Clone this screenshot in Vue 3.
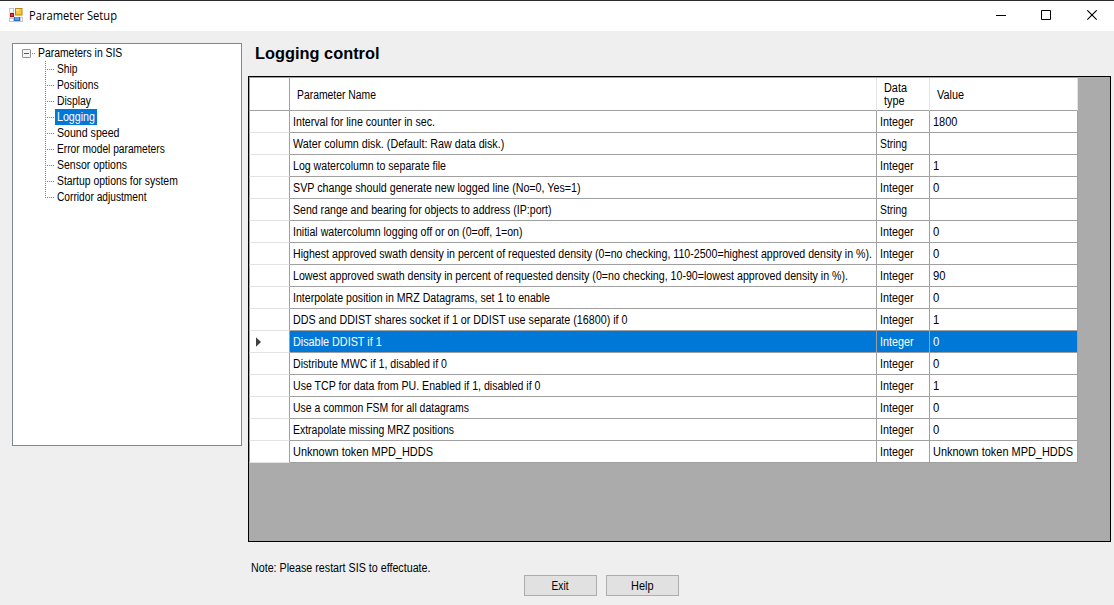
<script setup>
const tree = [
  ['Ship', 20.5], ['Positions', 41.5], ['Display', 34], ['Logging', 38], ['Sound speed', 62.5],
  ['Error model parameters', 107.8], ['Sensor options', 70],
  ['Startup options for system', 120.8], ['Corridor adjustment', 89.5]
]
const rows = [
  ['Interval for line counter in sec.', 142, 'Integer', '1800', 24.5],
  ['Water column disk. (Default: Raw data disk.)', 211.3, 'String', '', 0],
  ['Log watercolumn to separate file', 153, 'Integer', '1', 6.3],
  ['SVP change should generate new logged line (No=0, Yes=1)', 287.5, 'Integer', '0', 6.3],
  ['Send range and bearing for objects to address (IP:port)', 258.5, 'String', '', 0],
  ['Initial watercolumn logging off or on (0=off, 1=on)', 229.5, 'Integer', '0', 6.3],
  ['Highest approved swath density in percent of requested density (0=no checking, 110-2500=highest approved density in %).', 579, 'Integer', '0', 6.3],
  ['Lowest approved swath density in percent of requested density (0=no checking, 10-90=lowest approved density in %).', 555, 'Integer', '90', 12.5],
  ['Interpolate position in MRZ Datagrams, set 1 to enable', 257, 'Integer', '0', 6.3],
  ['DDS and DDIST shares socket if 1 or DDIST use separate (16800) if 0', 334.5, 'Integer', '1', 6.3],
  ['Disable DDIST if 1', 88.7, 'Integer', '0', 6.3],
  ['Distribute MWC if 1, disabled if 0', 154, 'Integer', '0', 6.3],
  ['Use TCP for data from PU. Enabled if 1, disabled if 0', 247.5, 'Integer', '1', 6.3],
  ['Use a common FSM for all datagrams', 176, 'Integer', '0', 6.3],
  ['Extrapolate missing MRZ positions', 161, 'Integer', '0', 6.3],
  ['Unknown token MPD_HDDS', 140, 'Integer', 'Unknown token MPD_HDDS', 140]
]
const selected = 10
const typeWidth = { Integer: 33.5, String: 27 }

// Condenses a label horizontally so that it takes up the given width.
const vFit = {
  mounted(el, { value }) {
    if (value && el.offsetWidth) {
      const natural = el.getBoundingClientRect().width
      el.style.transform = `scaleX(${value / natural})`
    }
  }
}
</script>

<template>
  <div class="window">
    <header class="titlebar">
      <svg class="appicon" width="14" height="14" viewBox="0 0 14 14">
        <rect width="14" height="14" fill="#c4c4c4" />
        <path d="M1 1h3v3H1zM1 11h3v2H1zM12 10h1v3h-1z" fill="#fff" />
        <rect x="5" width="9" height="9" fill="#f6f6f6" />
        <rect x="6" y="0" width="7.5" height="7.5" fill="#b98a12" />
        <rect x="7" y="1" width="5.5" height="5.5" fill="#fdc82f" />
        <rect x="7" y="1" width="3" height="2" fill="#ffe48a" />
        <rect x="0" y="4" width="5" height="6" fill="#f2dada" />
        <rect x="1" y="5" width="4" height="4" fill="#a31312" />
        <rect x="2" y="6" width="2" height="2" fill="#e0402c" />
        <rect x="5" y="9" width="6" height="4" fill="#3668c6" />
        <rect x="6" y="9" width="4" height="3" fill="#5f9cf0" />
      </svg>
      <span v-fit="88" class="t caption">Parameter Setup</span>
      <svg class="controls" width="104" height="12" viewBox="0 0 104 12" fill="none" stroke="#000">
        <path d="M0 5.5h10" />
        <path d="M45.5 .5h9v9h-9z" />
        <path d="M91.3 .3l9.4 9.4M100.7 .3l-9.4 9.4" stroke-width="1.1" />
      </svg>
    </header>

    <div class="body">
      <nav class="tree">
        <div class="root">
          <svg width="14" height="9" viewBox="0 0 14 9">
            <rect x=".5" y=".5" width="8" height="8" rx=".6" fill="#f6f6f6" stroke="#919191" />
            <path d="M2 4.5h5" stroke="#3a5ba6" />
            <path d="M10 4.5h1M12 4.5h1" stroke="#808080" />
          </svg>
          <span v-fit="84.3" class="t">Parameters in SIS</span>
        </div>
        <div v-for="(n, i) in tree" :key="n[0]" class="node">
          <svg width="10" height="16" viewBox="0 0 10 16" stroke="#808080" stroke-dasharray="1 1">
            <path :d="i === tree.length - 1 ? 'M.5 0v9' : 'M.5 0v16'" />
            <path d="M2 8.5h8" />
          </svg>
          <span class="label" :class="{ active: n[0] === 'Logging' }" :style="{ width: n[1] + 4 + 'px' }"><span v-fit="n[1]" class="t">{{ n[0] }}</span></span>
        </div>
      </nav>

      <main class="main">
        <h1><span v-fit="124.5" class="t">Logging control</span></h1>
        <section class="grid">
          <div class="table">
            <div class="row head">
              <div class="cell rh"></div>
              <div class="cell"><span v-fit="79" class="t">Parameter Name</span></div>
              <div class="cell two"><span v-fit="23" class="t data">Data</span><span v-fit="20.5" class="t">type</span></div>
              <div class="cell"><span v-fit="27" class="t">Value</span></div>
            </div>
            <div v-for="(r, i) in rows" :key="i" class="row" :class="{ sel: i === selected }">
              <div class="cell rh">
                <svg v-if="i === selected" width="5" height="10" viewBox="0 0 5 10"><path d="M0 .3L5 5 0 9.7z" fill="#404040" /></svg>
              </div>
              <div class="cell"><span v-fit="r[1]" class="t">{{ r[0] }}</span></div>
              <div class="cell"><span v-fit="typeWidth[r[2]]" class="t">{{ r[2] }}</span></div>
              <div class="cell"><span v-fit="r[4]" class="t">{{ r[3] }}</span></div>
            </div>
          </div>
        </section>
        <footer class="foot">
          <div class="note"><span v-fit="179.5" class="t">Note: Please restart SIS to effectuate.</span></div>
          <div class="buttons">
            <button><span v-fit="17" class="t mid">Exit</span></button>
            <button><span v-fit="22.5" class="t mid">Help</span></button>
          </div>
        </footer>
      </main>
    </div>
  </div>
</template>

<style>
body { margin: 0; overflow: hidden; }
</style>

<style scoped>
.window {
  width: 1114px;
  height: 605px;
  box-sizing: border-box;
  overflow: hidden;
  background: #efefef;
  color: #000;
  font: 12px/14px "Liberation Sans", Arial, sans-serif;
}
.t { display: inline-block; white-space: pre; transform-origin: 0 50%; }
.mid { transform-origin: 50% 50%; }
.titlebar {
  height: 31px;
  box-sizing: border-box;
  border-top: 1px solid #2b2b2b;
  background: #fff;
  display: flex;
  align-items: flex-start;
  padding: 0 14px 0 9px;
}
.appicon { margin-top: 7px; }
.caption { margin: 6px 0 0 5.5px; font: 12px/17px "Open Sans", "Noto Sans", sans-serif; }
.controls { margin: 9px 0 0 auto; }
.body { display: flex; height: 574px; }
.tree {
  width: 230px;
  height: 403px;
  box-sizing: border-box;
  margin: 12px 0 0 12px;
  border: 1px solid #828790;
  background: #fff;
  padding-top: 1px;
}
.root { height: 16px; display: flex; align-items: center; padding-left: 9px; }
.root .t { margin-left: 1.5px; }
.node { height: 16px; display: flex; padding-left: 32px; }
.label { box-sizing: border-box; height: 16px; line-height: 16px; padding-left: 1.5px; white-space: nowrap; }
.label.active { background: #0078d7; color: #fff; }
.main { margin-left: 6px; width: 863px; display: flex; flex-direction: column; }
h1 { margin: 0; height: 45px; box-sizing: border-box; padding: 12px 0 0 7px; font-size: 16.5px; line-height: 20px; font-weight: 700; }
.grid { height: 466px; box-sizing: border-box; border: 1px solid #000; background: #ababab; }
.table { width: 829px; border-top: 1px solid #a0a0a0; }
.row {
  display: grid;
  grid-template-columns: 41px 587px 53px 148px;
  height: 22px;
}
.cell {
  box-sizing: border-box;
  border-right: 1px solid #a0a0a0;
  border-bottom: 1px solid #a0a0a0;
  background: #fff;
  padding-left: 2.5px;
  display: flex;
  align-items: center;
  min-width: 0;
}
.rh { border-bottom-color: #e3e3e3; border-left: 1px solid #a0a0a0; padding-left: 6px; }
.head { height: 33px; }
.head .cell { padding: 2px 0 0 6.5px; border-right-color: #e3e3e3; }
.head .rh { border-bottom-color: #a0a0a0; border-right-color: #a0a0a0; }
.head .two { flex-direction: column; justify-content: center; align-items: flex-start; line-height: 13px; }
.data { margin-left: .5px; }
.sel .cell:not(.rh) { background: #0078d7; color: #fff; }
.foot { flex: 1; display: flex; }
.note { width: 276px; box-sizing: border-box; padding: 19px 0 0 2.5px; }
.buttons { display: flex; gap: 9px; margin-top: 33px; }
button {
  width: 73px;
  height: 21px;
  box-sizing: border-box;
  margin: 0;
  padding: 1px 0 0;
  border: 1px solid #adadad;
  background: #e1e1e1;
  color: #000;
  font: inherit;
  line-height: 19px;
  text-align: center;
}
</style>
